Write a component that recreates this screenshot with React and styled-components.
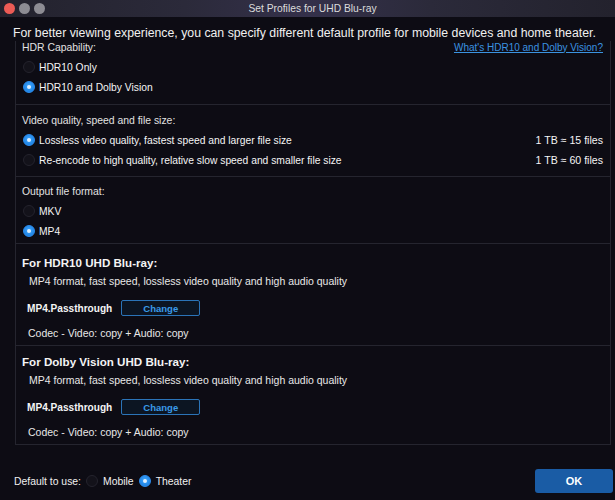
import React from "react";
import styled, { createGlobalStyle } from "styled-components";

const Global = createGlobalStyle`
  html, body { margin: 0; padding: 0; background: #0d0c14; }
  body { font-family: "Liberation Sans", Arial, sans-serif; color: #e6e6e6; }
  * { box-sizing: border-box; }
`;

const Window = styled.div`
  width: 615px;
  height: 500px;
  background: #0d0c14;
  display: flex;
  flex-direction: column;
  overflow: hidden;
`;

const TitleBar = styled.div`
  height: 17px;
  flex: none;
  display: grid;
  grid-template-columns: 1fr auto 1fr;
  align-items: center;
  background: linear-gradient(90deg, #23222d 0%, #2b2a3a 30%, #34304a 50%, #2b2a3a 70%, #23222d 100%);
`;

const Lights = styled.div`
  display: flex;
  gap: 4px;
  padding-left: 4px;
`;

const Light = styled.span`
  width: 11px;
  height: 11px;
  border-radius: 50%;
  background: ${(p) => p.$color};
`;

const Title = styled.div`
  font-size: 10.3px;
  color: #dcdcdc;
  padding-left: 10px;
`;

const Intro = styled.div`
  font-size: 12.3px;
  line-height: 16px;
  padding: 8px 0 0 13px;
  color: #f0f0f0;
  white-space: nowrap;
`;

const Panel = styled.div`
  margin-left: 15px;
  width: 596px;
  border-left: 1px solid #25252f;
  border-right: 1px solid #25252f;
  border-bottom: 1px solid #25252f;
  display: flex;
  flex-direction: column;
`;

const Section = styled.div`
  display: flex;
  flex-direction: column;
  padding: ${(p) => p.$pad};
  border-bottom: ${(p) => (p.$last ? "none" : "1px solid #25252f")};
`;

const HeaderRow = styled.div`
  height: ${(p) => p.$h || 20}px;
  margin-bottom: ${(p) => p.$mb || 0}px;
  display: flex;
  align-items: center;
  justify-content: space-between;
  padding: 0 7px 0 6px;
  font-size: 10.4px;
  color: #e2e2e2;
`;

const Link = styled.a`
  color: #3b93e0;
  text-decoration: underline;
  font-size: 10px;
`;

const RadioRow = styled.label`
  height: 20px;
  display: flex;
  align-items: center;
  gap: 4px;
  padding: 0 7px 0 7px;
  font-size: 10.3px;
  color: #f4f4f4;
`;

const RadioLabel = styled.span`
  flex: 1;
`;

const Side = styled.span`
  font-size: 10.6px;
  color: #f4f4f4;
`;

const Radio = styled.span`
  width: 12px;
  height: 12px;
  flex: none;
  border-radius: 50%;
  display: flex;
  align-items: center;
  justify-content: center;
  background: ${(p) => (p.$on ? "radial-gradient(circle at 50% 40%, #3ea6ff, #1478da)" : "#13121a")};
  border: 1px solid ${(p) => (p.$on ? "#2d8ef0" : "#24232d")};
  &::after {
    content: "";
    width: 4px;
    height: 4px;
    border-radius: 50%;
    background: ${(p) => (p.$on ? "#dff0ff" : "transparent")};
  }
`;

const Heading = styled.div`
  height: 18px;
  display: flex;
  align-items: center;
  padding-left: 6px;
  font-size: 11.6px;
  font-weight: bold;
  color: #f4f4f4;
`;

const Line = styled.div`
  height: 20px;
  margin-top: ${(p) => p.$mt || 0}px;
  display: flex;
  align-items: center;
  padding-left: ${(p) => p.$pl || 13}px;
  font-size: 10.5px;
  color: #e8e8e8;
`;

const PassRow = styled.div`
  height: 24px;
  margin: 5px 0 3px;
  display: flex;
  align-items: center;
  gap: 9px;
  padding-left: 11px;
`;

const PassLabel = styled.span`
  font-size: 10.1px;
  font-weight: bold;
  color: #f4f4f4;
`;

const ChangeButton = styled.button`
  width: 79px;
  height: 16px;
  padding: 0;
  border: 1px solid #2b74b8;
  border-radius: 2px;
  background: #0c1522;
  color: #3a9ae8;
  font-family: inherit;
  font-size: 9.5px;
  font-weight: bold;
`;

const Footer = styled.div`
  margin-top: 24px;
  height: 24px;
  display: flex;
  align-items: center;
  padding: 0 2px 0 14px;
  font-size: 10.4px;
  color: #f0f0f0;
`;

const FooterGroup = styled.div`
  flex: 1;
  display: flex;
  align-items: center;
  gap: 5px;
`;

const FooterText = styled.span`
  margin-right: ${(p) => p.$mr || 0}px;
`;

const OkButton = styled.button`
  width: 78px;
  height: 24px;
  border: none;
  border-radius: 3px;
  background: #1a5ca5;
  color: #ffffff;
  font-family: inherit;
  font-size: 11px;
  font-weight: bold;
`;

function ProfileBlock({ title, pad, last }) {
  return (
    <Section $pad={pad} $last={last}>
      <Heading>{title}</Heading>
      <Line>MP4 format, fast speed, lossless video quality and high audio quality</Line>
      <PassRow>
        <PassLabel>MP4.Passthrough</PassLabel>
        <ChangeButton>Change</ChangeButton>
      </PassRow>
      <Line $pl={12}>Codec - Video: copy + Audio: copy</Line>
    </Section>
  );
}

export default function App() {
  return (
    <Window>
      <Global />
      <TitleBar>
        <Lights>
          <Light $color="#ec5b55" />
          <Light $color="#8d8c93" />
          <Light $color="#8d8c93" />
        </Lights>
        <Title>Set Profiles for UHD Blu-ray</Title>
        <div />
      </TitleBar>
      <Intro>
        For better viewing experience, you can specify different default profile for mobile devices and home theater.
      </Intro>
      <Panel>
        <Section $pad="0 0 7px">
          <HeaderRow $h={12} $mb={4}>
            <span>HDR Capability:</span>
            <Link>What's HDR10 and Dolby Vision?</Link>
          </HeaderRow>
          <RadioRow>
            <Radio />
            <RadioLabel>HDR10 Only</RadioLabel>
          </RadioRow>
          <RadioRow>
            <Radio $on />
            <RadioLabel>HDR10 and Dolby Vision</RadioLabel>
          </RadioRow>
        </Section>
        <Section $pad="5px 0 6px">
          <HeaderRow>
            <span>Video quality, speed and file size:</span>
          </HeaderRow>
          <RadioRow>
            <Radio $on />
            <RadioLabel>Lossless video quality, fastest speed and larger file size</RadioLabel>
            <Side>1 TB ≈ 15 files</Side>
          </RadioRow>
          <RadioRow>
            <Radio />
            <RadioLabel>Re-encode to high quality, relative slow speed and smaller file size</RadioLabel>
            <Side>1 TB ≈ 60 files</Side>
          </RadioRow>
        </Section>
        <Section $pad="4px 0 2px">
          <HeaderRow>
            <span>Output file format:</span>
          </HeaderRow>
          <RadioRow>
            <Radio />
            <RadioLabel>MKV</RadioLabel>
          </RadioRow>
          <RadioRow>
            <Radio $on />
            <RadioLabel>MP4</RadioLabel>
          </RadioRow>
        </Section>
        <ProfileBlock title="For HDR10 UHD Blu-ray:" pad="9px 0 2px" />
        <ProfileBlock title="For Dolby Vision UHD Blu-ray:" pad="6px 0 2px" last />
      </Panel>
      <Footer>
        <FooterGroup>
          <FooterText>Default to use:</FooterText>
          <Radio />
          <FooterText>Mobile</FooterText>
          <Radio $on />
          <FooterText>Theater</FooterText>
        </FooterGroup>
        <OkButton>OK</OkButton>
      </Footer>
    </Window>
  );
}
